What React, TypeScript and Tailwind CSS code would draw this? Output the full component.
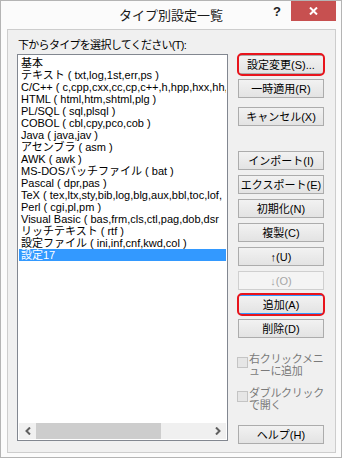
const items = [
  "基本",
  "テキスト ( txt,log,1st,err,ps )",
  "C/C++ ( c,cpp,cxx,cc,cp,c++,h,hpp,hxx,hh,",
  "HTML ( html,htm,shtml,plg )",
  "PL/SQL ( sql,plsql )",
  "COBOL ( cbl,cpy,pco,cob )",
  "Java ( java,jav )",
  "アセンブラ ( asm )",
  "AWK ( awk )",
  "MS-DOSバッチファイル ( bat )",
  "Pascal ( dpr,pas )",
  "TeX ( tex,ltx,sty,bib,log,blg,aux,bbl,toc,lof,",
  "Perl ( cgi,pl,pm )",
  "Visual Basic ( bas,frm,cls,ctl,pag,dob,dsr",
  "リッチテキスト ( rtf )",
  "設定ファイル ( ini,inf,cnf,kwd,col )",
  "設定17",
];

function Btn({
  label,
  className = "",
  disabled = false,
  focused = false,
  marked = false,
}: {
  label: string;
  className?: string;
  disabled?: boolean;
  focused?: boolean;
  marked?: boolean;
}) {
  return (
    <div
      className={`relative h-[19px] w-[86px] flex items-center justify-center border text-[11px] leading-[12px] whitespace-nowrap ${
        disabled
          ? "border-[#cfcfcf] bg-[#f4f4f4] text-[#a6a6a6]"
          : focused
          ? "border-[#3399ff] bg-linear-to-b from-[#f2f2f2] to-[#e3e3e3] text-black"
          : "border-[#acacac] bg-linear-to-b from-[#f2f2f2] to-[#e3e3e3] text-black"
      } ${className}`}
    >
      {label}
      {marked && (
        <div className="absolute -left-[2px] -right-[2px] -top-[3px] -bottom-[3px] rounded-[5px] border-2 border-[#e8141c]" />
      )}
    </div>
  );
}

function Check({ lines, className = "" }: { lines: string[]; className?: string }) {
  return (
    <div className={`flex items-start ${className}`}>
      <div className="-ml-px mt-[4px] h-[11px] w-[11px] shrink-0 border border-[#c4c4c4] bg-[#e6e6e6]" />
      <div className="ml-px text-[11px] leading-[12px] tracking-[-0.3px] text-[#7a7a7a] whitespace-nowrap">
        {lines.map((l) => (
          <div key={l}>{l}</div>
        ))}
      </div>
    </div>
  );
}

export default function App() {
  return (
    <div className="h-[459px] w-[343px] bg-white font-['Liberation_Sans','Noto_Sans_CJK_JP',sans-serif]">
      <div className="flex h-[458px] w-[342px] flex-col border border-[#b4b4b4] bg-[#fbfbfb]">
        {/* title bar */}
        <div className="grid h-[28px] grid-cols-[71px_1fr_71px] items-start">
          <div />
          <div className="pt-[6px] text-center text-[13px] leading-[16px] text-[#1a1a1a] font-['Noto_Sans_CJK_JP',sans-serif]">
            タイプ別設定一覧
          </div>
          <div className="flex items-start">
            <div className="w-[21px] pl-[3px] pt-[5px] text-[13px] font-bold leading-[12px] text-[#222]">?</div>
            <div className="flex h-[20px] w-[45px] items-center justify-center bg-[#c75050]">
              <svg width="9" height="8" viewBox="0 0 9 8">
                <path d="M1 0.5 L8 7.5 M8 0.5 L1 7.5" stroke="white" strokeWidth="2" />
              </svg>
            </div>
          </div>
        </div>

        {/* client area */}
        <div className="ml-[6px] flex h-[424px] w-[329px] border border-[#cdcdcd] bg-[#f0f0f0] pl-[9px] pt-[9px]">
          <div className="flex w-[211px] flex-col">
            <div className="ml-px h-[15px] text-[11px] leading-[12px] tracking-[-0.7px] text-black whitespace-nowrap">
              下からタイプを選択してください(T):
            </div>
            <div className="flex h-[387px] flex-col border border-[#828790] bg-white p-px">
              <div className="flex-1 overflow-hidden pt-px">
                {items.map((it, i) => (
                  <div
                    key={it}
                    className={`h-[12px] pl-[2px] text-[11px] leading-[12px] whitespace-nowrap ${
                      i === items.length - 1 ? "bg-[#3399ff] text-white" : "text-black"
                    }`}
                  >
                    {it}
                  </div>
                ))}
              </div>
              <div className="flex h-[16px] bg-[#f0f0f0]">
                <div className="flex w-[17px] items-center justify-center">
                  <svg width="6" height="8" viewBox="0 0 6 8">
                    <path d="M5 0.5 L1.5 4 L5 7.5" fill="none" stroke="#606060" strokeWidth="2" />
                  </svg>
                </div>
                <div className="w-[125px] bg-[#cdcdcd]" />
                <div className="flex-1" />
                <div className="flex w-[17px] items-center justify-center">
                  <svg width="6" height="8" viewBox="0 0 6 8">
                    <path d="M1 0.5 L4.5 4 L1 7.5" fill="none" stroke="#606060" strokeWidth="2" />
                  </svg>
                </div>
              </div>
            </div>
          </div>

          <div className="ml-[10px] flex w-[86px] flex-col pt-[16px]">
            <Btn label="設定変更(S)..." marked />
            <Btn label="一時適用(R)" className="mt-[5px]" />
            <Btn label="キャンセル(X)" className="mt-[9px]" />
            <Btn label="インポート(I)" className="mt-[25px]" />
            <Btn label="エクスポート(E)" className="mt-[5px]" />
            <Btn label="初期化(N)" className="mt-[5px]" />
            <Btn label="複製(C)" className="mt-[5px]" />
            <Btn label="↑(U)" className="mt-[5px]" />
            <Btn label="↓(O)" className="mt-[5px]" disabled />
            <Btn label="追加(A)" className="mt-[5px]" focused marked />
            <Btn label="削除(D)" className="mt-[5px]" />
            <Check lines={["右クリックメニ", "ューに追加"]} className="mt-[15px]" />
            <Check lines={["ダブルクリック", "で開く"]} className="mt-[10px]" />
            <Btn label="ヘルプ(H)" className="mt-[14px]" />
          </div>
        </div>
      </div>
    </div>
  );
}
